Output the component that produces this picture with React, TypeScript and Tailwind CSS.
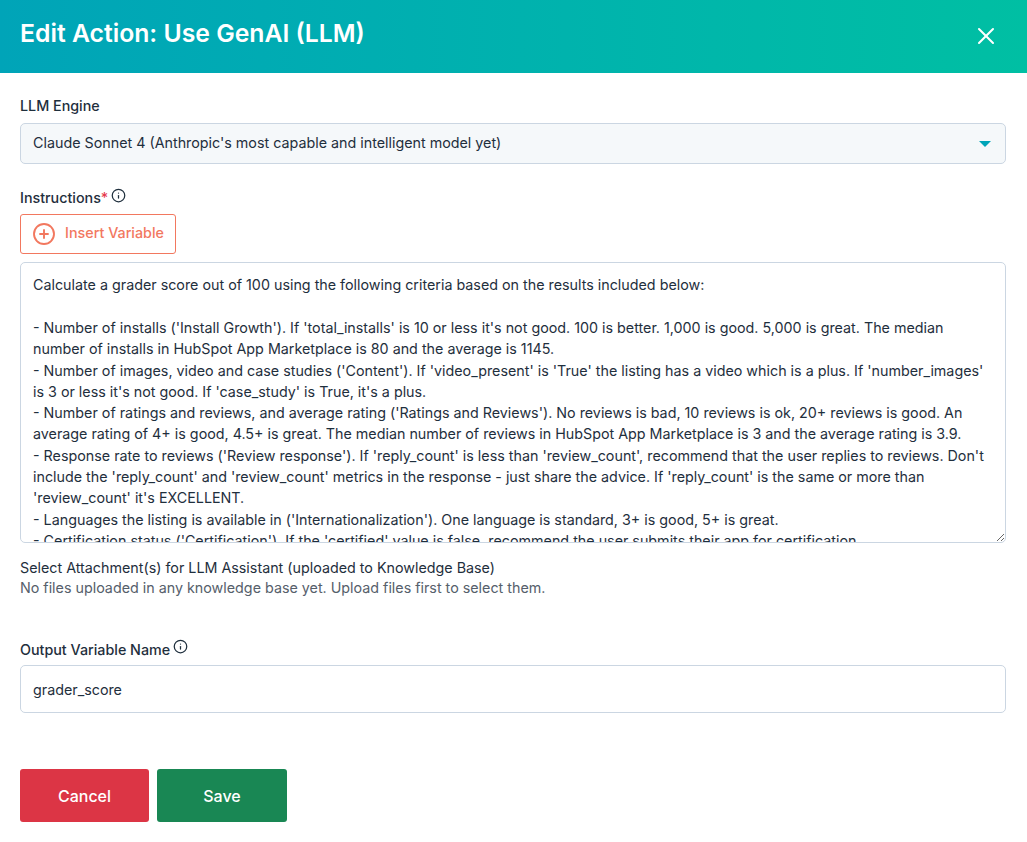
import React from "react";
import { X, Info, CirclePlus } from "lucide-react";

const instructions = `Calculate a grader score out of 100 using the following criteria based on the results included below:

- Number of installs ('Install Growth'). If 'total_installs' is 10 or less it's not good. 100 is better. 1,000 is good. 5,000 is great. The median number of installs in HubSpot App Marketplace is 80 and the average is 1145.
- Number of images, video and case studies ('Content'). If 'video_present' is 'True' the listing has a video which is a plus. If 'number_images' is 3 or less it's not good. If 'case_study' is True, it's a plus.
- Number of ratings and reviews, and average rating ('Ratings and Reviews'). No reviews is bad, 10 reviews is ok, 20+ reviews is good. An average rating of 4+ is good, 4.5+ is great. The median number of reviews in HubSpot App Marketplace is 3 and the average rating is 3.9.
- Response rate to reviews ('Review response'). If 'reply_count' is less than 'review_count', recommend that the user replies to reviews. Don't include the 'reply_count' and 'review_count' metrics in the response - just share the advice. If 'reply_count' is the same or more than 'review_count' it's EXCELLENT.
- Languages the listing is available in ('Internationalization'). One language is standard, 3+ is good, 5+ is great.
- Certification status ('Certification'). If the 'certified' value is false, recommend the user submits their app for certification.`;

export default function App() {
  return (
    <div className="w-[1027px] h-[842px] overflow-hidden bg-white font-['Inter',sans-serif] text-[#1f2f3d]">
      <header className="h-[73px] pl-5 pr-[27px] flex items-center justify-between bg-gradient-to-r from-[#00a4b8] to-[#00bfa3]">
        <h1 className="text-[24.75px] font-semibold text-white -mt-[6px]">Edit Action: Use GenAI (LLM)</h1>
        <X className="text-white -mt-[2px]" size={28} strokeWidth={1.75} />
      </header>

      <main className="pl-5 pr-[21px] pt-[24px]">
        <label className="block text-[14.3px] leading-[18px] font-medium">LLM Engine</label>
        <div className="mt-2 h-[41px] px-3 flex items-center justify-between bg-[#f5f8fa] border border-[#cbd6e2] rounded-[5px] text-[14.3px]">
          <span className="-mt-[2px]">Claude Sonnet 4 (Anthropic's most capable and intelligent model yet)</span>
          <span className="mr-[2px] w-0 h-0 border-x-[6px] border-x-transparent border-t-[6px] border-t-[#00a4b8]" />
        </div>

        <div className="mt-[25px] flex items-start text-[14.3px] leading-[18px] font-[550]">
          <span>Instructions</span>
          <span className="text-[#e5384c]">*</span>
          <Info className="ml-[3px] -mt-[1px]" size={15} strokeWidth={2} />
        </div>
        <button className="mt-[7px] h-[40px] w-[156px] flex items-center justify-center gap-[9px] border border-[#f2785f] rounded-[3px] text-[#f2785f] text-[14.3px] font-medium">
          <CirclePlus size={24} strokeWidth={1.9} />
          <span className="-mt-[2px]">Insert Variable</span>
        </button>

        <textarea
          readOnly
          defaultValue={instructions}
          className="mt-[8px] block w-full h-[281px] px-3 pt-[11.4px] border border-[#cbd6e2] rounded-[5px] text-[14.3px] leading-[21.3px] outline-none [scrollbar-width:none]"
        />

        <p className="mt-[15px] text-[14.3px] leading-[20px]">Select Attachment(s) for LLM Assistant (uploaded to Knowledge Base)</p>
        <p className="text-[14.3px] leading-[20px] text-[#56606b]">No files uploaded in any knowledge base yet. Upload files first to select them.</p>

        <div className="mt-[43px] flex items-start text-[14.3px] leading-[18px] font-[550]">
          <span>Output Variable Name</span>
          <Info className="ml-[3px] -mt-[2px]" size={15} strokeWidth={2} />
        </div>
        <input
          readOnly
          defaultValue="grader_score"
          className="mt-[6px] block w-full h-[48px] px-3 border border-[#cbd6e2] rounded-[5px] text-[14.3px] outline-none"
        />

        <div className="mt-[56px] flex gap-2">
          <button className="w-[129px] h-[53px] pt-[1px] rounded-[3px] bg-[#dc3545] text-white text-[16px] font-medium">Cancel</button>
          <button className="w-[130px] h-[53px] pt-[1px] rounded-[3px] bg-[#198754] text-white text-[16px] font-medium">Save</button>
        </div>
      </main>
    </div>
  );
}
